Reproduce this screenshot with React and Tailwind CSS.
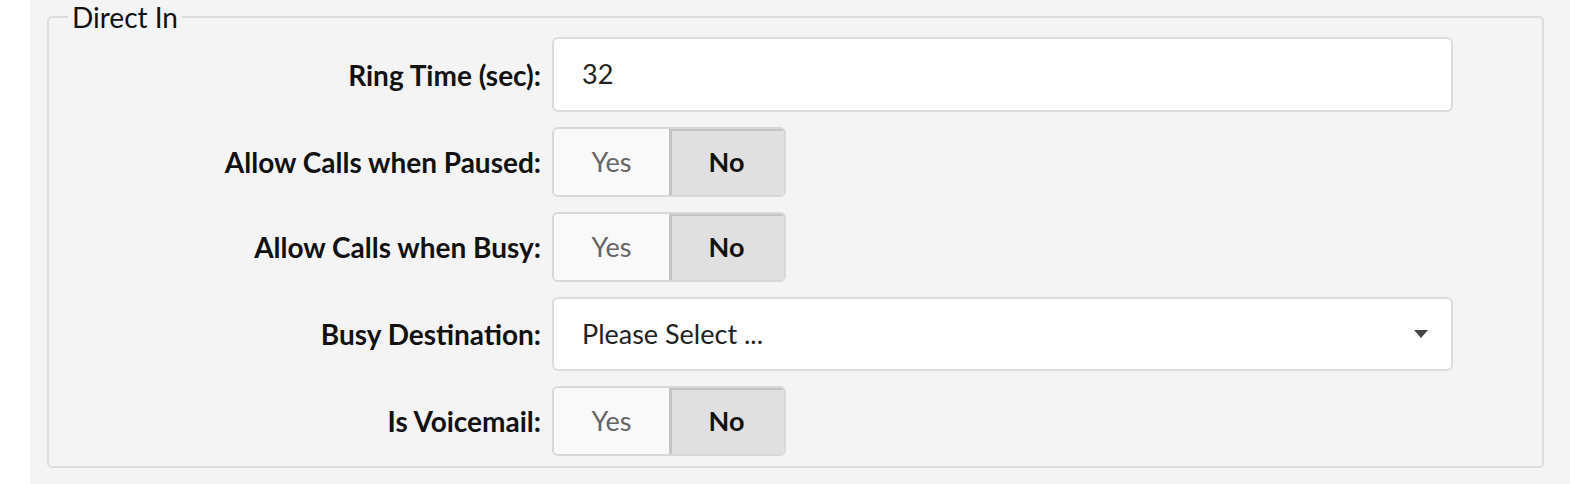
import React from 'react';

const font = { fontFamily: 'Lato, "Noto Sans", sans-serif' };

function Row({ label, children }) {
  return (
    <div className="flex items-center">
      <label className="w-[503px] shrink-0 pr-[11px] text-right text-[28px] font-bold text-[#111]">
        {label}
      </label>
      {children}
    </div>
  );
}

function YesNo() {
  return (
    <div className="flex h-[70px] w-[234px] overflow-hidden rounded-[6px] border-2 border-[#d8d8d8] text-[27px]">
      <button className="flex w-[115px] items-center justify-center bg-[#f9f9f9] text-[#666]">Yes</button>
      <button className="flex flex-1 items-center justify-center bg-[#e0e0e0] font-bold text-[#111] shadow-[inset_3px_2px_0_#c4c4c4]">
        No
      </button>
    </div>
  );
}

export default function App() {
  return (
    <div className="flex h-[484px] w-[1570px] bg-white" style={font}>
      <div className="ml-[30px] flex-1 bg-[#f4f4f4] pl-[17px] pr-[26px]">
        <fieldset className="h-[468px] rounded-[5px] border-2 border-[#dcdcdc]">
          <legend className="ml-[19px] px-[4px] text-[28px] leading-[34px] text-[#111]">Direct In</legend>
          <div className="flex flex-col gap-[15px] pt-[3px]">
            <Row label="Ring Time (sec):">
              <div className="flex h-[75px] w-[901px] items-center rounded-[6px] border-2 border-[#dcdcdc] bg-white pl-[28px] text-[27px] text-[#222]">
                32
              </div>
            </Row>
            <Row label="Allow Calls when Paused:">
              <YesNo />
            </Row>
            <Row label="Allow Calls when Busy:">
              <YesNo />
            </Row>
            <Row label="Busy Destination:">
              <div className="flex h-[74px] w-[901px] items-center justify-between rounded-[6px] border-2 border-[#dcdcdc] bg-white pl-[28px] pr-[23px] text-[27px] text-[#222]">
                <span>Please Select ...</span>
                <svg width="14" height="8" viewBox="0 0 14 8">
                  <path d="M0 0h14L7 8z" fill="#444" />
                </svg>
              </div>
            </Row>
            <Row label="Is Voicemail:">
              <YesNo />
            </Row>
          </div>
        </fieldset>
      </div>
    </div>
  );
}
